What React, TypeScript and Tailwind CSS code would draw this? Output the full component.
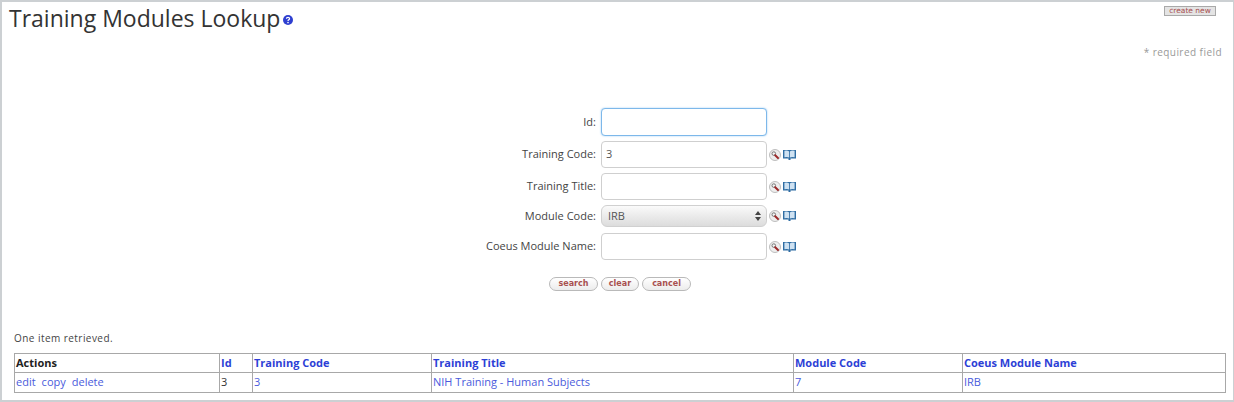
import React from "react";

const font = { fontFamily: '"Open Sans", "Noto Sans", sans-serif' };

function LookupIcons() {
    return (
        <div className="flex items-center gap-[2px] ml-[2px] w-[30px] shrink-0">
            <svg width="12" height="12" viewBox="0 0 12 12">
                <circle cx="6" cy="6" r="5.5" fill="#eeeeee" stroke="#bdbdbd" />
                <circle cx="4.8" cy="4.6" r="1.8" fill="#f4f4f4" stroke="#777777" strokeWidth="1" />
                <path d="M6.2 6.2 L9 9" stroke="#9c2a2a" strokeWidth="2" strokeLinecap="round" />
            </svg>
            <svg width="13" height="12" viewBox="0 0 13 12">
                <path d="M0 1 H13 V9.5 H7.5 V11 H5.5 V9.5 H0 Z" fill="#2f6da3" />
                <path d="M1.4 1.8 Q4.5 1.2 6.1 2.4 V8.4 Q4.5 7.6 1.4 8.2 Z" fill="#cfe2f2" />
                <path d="M11.6 1.8 Q8.5 1.2 6.9 2.4 V8.4 Q8.5 7.6 11.6 8.2 Z" fill="#cfe2f2" />
            </svg>
        </div>
    );
}

function Field({
    label,
    value,
    h,
    mt,
    focused,
    icons = true,
}: {
    label: string;
    value?: string;
    h: string;
    mt: string;
    focused?: boolean;
    icons?: boolean;
}) {
    return (
        <div className={`flex items-center ${mt}`}>
            <div className="w-[596px] text-right text-[11px] text-[#444444] shrink-0">{label}</div>
            <div
                className={`ml-[5px] w-[166px] ${h} rounded-[4px] bg-white flex items-center px-[4px] text-[11px] text-[#555555] ${
                    focused ? "border border-[#7db8ea] shadow-[0_0_2px_#9ccbf2]" : "border border-[#cfcfcf]"
                }`}
            >
                {value}
            </div>
            {icons && <LookupIcons />}
        </div>
    );
}

function RedButton({ label, w }: { label: string; w: string }) {
    return (
        <div
            className={`${w} h-[14px] rounded-full border border-[#b9b9b9] bg-gradient-to-b from-white to-[#ececec] flex items-center justify-center text-[8px] font-bold text-[#a85050]`}
            style={{ fontFamily: '"DejaVu Sans", sans-serif' }}
        >
            {label}
        </div>
    );
}

const headers = [
    { label: "Actions", w: "w-[205px]", dark: true },
    { label: "Id", w: "w-[33px]" },
    { label: "Training Code", w: "w-[179px]" },
    { label: "Training Title", w: "w-[362px]" },
    { label: "Module Code", w: "w-[169px]" },
    { label: "Coeus Module Name", w: "w-[263px]" },
];

export default function App() {
    return (
        <div
            className="w-[1234px] h-[402px] bg-white border-t-2 border-l-2 border-r border-b-2 border-[#ccd0d3] overflow-hidden flex flex-col"
            style={font}
        >
            {/* Title row */}
            <div className="flex justify-between h-[41px] shrink-0">
                <div className="flex items-start pl-[7px]">
                    <h1 className="text-[23px] leading-[33px] text-[#333333] font-normal">
                        Training Modules Lookup
                    </h1>
                    <svg width="10" height="10" viewBox="0 0 10 10" className="mt-[13px] ml-[3px]">
                        <circle cx="5" cy="5" r="5" fill="#2e3fd0" />
                        <path d="M3.4 3.8 Q3.5 2.4 5 2.4 Q6.6 2.4 6.6 3.7 Q6.6 4.5 5.6 4.9 Q5 5.2 5 6" fill="none" stroke="#ffffff" strokeWidth="1.2" />
                        <circle cx="5" cy="7.6" r="0.8" fill="#ffffff" />
                    </svg>
                </div>
                <div
                    className="mr-[17px] mt-[4px] w-[52px] h-[10px] bg-[#e4e4e4] border border-[#a9a9a9] flex items-center justify-center text-[7.5px] text-[#a85050]"
                    style={{ fontFamily: '"DejaVu Sans", sans-serif' }}
                >
                    create new
                </div>
            </div>

            <div className="text-right pr-[11px] mt-[2px] text-[10px] leading-[14px] text-[#999999] tracking-[0.45px] shrink-0">
                * required field
            </div>

            {/* Search form */}
            <div className="-ml-[2px] mt-[49px] shrink-0">
                <Field label="Id:" h="h-[28px]" mt="mt-0" focused icons={false} />
                <Field label="Training Code:" value="3" h="h-[27px]" mt="mt-[5px]" />
                <Field label="Training Title:" h="h-[27px]" mt="mt-[5px]" />
                <div className="flex items-center mt-[5px]">
                    <div className="w-[596px] text-right text-[11px] text-[#444444] shrink-0">Module Code:</div>
                    <div className="ml-[5px] w-[166px] h-[22px] rounded-[6px] border border-[#d0d0d0] bg-gradient-to-b from-[#fafafa] to-[#dcdcdc] flex items-center justify-between pl-[6px] pr-[5px] text-[11px] text-[#555555]">
                        <span>IRB</span>
                        <svg width="6" height="10" viewBox="0 0 6 10">
                            <path d="M3 0 L6 4 H0 Z M0 6 H6 L3 10 Z" fill="#444444" />
                        </svg>
                    </div>
                    <LookupIcons />
                </div>
                <Field label="Coeus Module Name:" h="h-[27px]" mt="mt-[6px]" />
                <div className="flex gap-[3px] mt-[17px] ml-[549px]">
                    <RedButton label="search" w="w-[49px]" />
                    <RedButton label="clear" w="w-[38px]" />
                    <RedButton label="cancel" w="w-[49px]" />
                </div>
            </div>

            <div className="ml-[12px] mt-[40px] text-[10px] leading-[14px] text-[#444444] tracking-[0.45px] shrink-0">
                One item retrieved.
            </div>

            {/* Results */}
            <table className="ml-[12px] mt-[8px] w-[1211px] table-fixed border-collapse text-[11px] shrink-0">
                <thead>
                    <tr className="h-[19px]">
                        {headers.map((h) => (
                            <th
                                key={h.label}
                                className={`${h.w} border border-[#a8a8a8] px-[1px] py-0 text-left font-bold ${
                                    h.dark ? "text-[#222222]" : "text-[#2d3fd6]"
                                }`}
                            >
                                {h.label}
                            </th>
                        ))}
                    </tr>
                </thead>
                <tbody>
                    <tr className="h-[20px] text-[#4a5bdc]">
                        <td className="border border-[#a8a8a8] px-[1px] py-0">
                            <span className="mr-[6px]">edit</span>
                            <span className="mr-[6px]">copy</span>
                            <span>delete</span>
                        </td>
                        <td className="border border-[#a8a8a8] px-[1px] py-0 text-[#333333]">3</td>
                        <td className="border border-[#a8a8a8] px-[1px] py-0">3</td>
                        <td className="border border-[#a8a8a8] px-[1px] py-0">NIH Training - Human Subjects</td>
                        <td className="border border-[#a8a8a8] px-[1px] py-0">7</td>
                        <td className="border border-[#a8a8a8] px-[1px] py-0">IRB</td>
                    </tr>
                </tbody>
            </table>
        </div>
    );
}
